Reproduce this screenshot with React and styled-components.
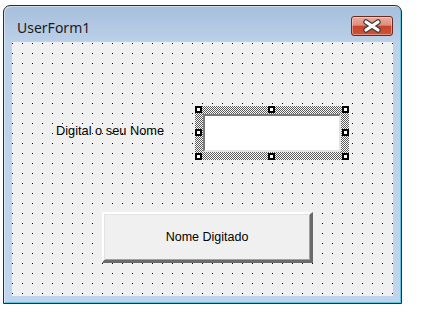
import React from 'react';
import styled, { createGlobalStyle } from 'styled-components';

const GlobalStyle = createGlobalStyle`
  html, body {
    margin: 0;
    padding: 0;
    background: #ffffff;
  }
`;

const Window = styled.div`
  margin: 5px 0 0 3px;
  width: 399px;
  height: 299px;
  box-sizing: border-box;
  border: 1px solid #2e2e2e;
  border-radius: 7px 7px 0 0;
  padding: 0 8px 7px;
  display: flex;
  flex-direction: column;
  background: linear-gradient(#a6bedb 0px, #b2c8e3 20px, #bcd2eb 38px, #bfd4ed 100%);
  box-shadow: inset 1px 1px 0 rgba(255, 255, 255, 0.45), inset -1px -1px 0 #62c4dc;
`;

const TitleBar = styled.div`
  height: 36px;
  flex: none;
  display: flex;
  align-items: flex-start;
  justify-content: space-between;
`;

const Title = styled.span`
  margin: 13px 0 0 5px;
  font-family: "Noto Sans", "Open Sans", sans-serif;
  font-size: 14px;
  line-height: 18px;
  color: #1b1b1b;
`;

const CloseButton = styled.div`
  margin-top: 10px;
  width: 42px;
  height: 20px;
  box-sizing: border-box;
  border: 1px solid #6b2a1e;
  border-radius: 3px;
  display: flex;
  align-items: center;
  justify-content: center;
  background: linear-gradient(#e9ad9f 0%, #dc8f7d 45%, #c8442b 52%, #cc5439 100%);
  box-shadow: inset 0 0 0 1px rgba(255, 225, 215, 0.45);
`;

const Client = styled.div`
  flex: 1;
  position: relative;
  background:
    linear-gradient(to right, transparent 1px, #f0f0f0 1px) 0 1px / 10px 10px,
    linear-gradient(#000 1px, #f0f0f0 1px) 0 1px / 10px 10px;
`;

const Label = styled.div`
  position: absolute;
  left: 44px;
  top: 81px;
  font-family: "Liberation Sans", Arial, sans-serif;
  font-size: 12.8px;
  line-height: 16px;
  color: #000;
  white-space: nowrap;
`;

const Selection = styled.div`
  position: absolute;
  left: 183px;
  top: 64px;
  width: 154px;
  height: 54px;
  box-sizing: border-box;
  padding: 8px;
  background: repeating-conic-gradient(#5a5a5a 0 25%, #fbfbfb 0 50%) 0 0 / 2px 2px;
`;

const TextBox = styled.div`
  width: 100%;
  height: 100%;
  box-sizing: border-box;
  background: #fff;
  border-style: solid;
  border-width: 2px;
  border-color: #7a7a7a #e3e3e3 #e3e3e3 #7a7a7a;
`;

const Handle = styled.span`
  position: absolute;
  width: 7px;
  height: 7px;
  box-sizing: border-box;
  background: #fff;
  border: 2px solid #000;
  left: ${p => p.$x};
  top: ${p => p.$y};
`;

const CommandButton = styled.div`
  position: absolute;
  left: 90px;
  top: 170px;
  width: 211px;
  height: 51px;
  box-sizing: border-box;
  display: flex;
  align-items: center;
  justify-content: center;
  background: #f0f0f0;
  border-style: solid;
  border-width: 2px 3px 3px 2px;
  border-color: #ffffff #6a6a6a #6a6a6a #ffffff;
  box-shadow: inset 1px 1px 0 #e3e3e3, inset -1px -1px 0 #a0a0a0;
  font-family: "Liberation Sans", Arial, sans-serif;
  font-size: 12.5px;
  color: #000;
`;

const handles = [
  ['0px', '0px'], ['73px', '0px'], ['147px', '0px'],
  ['0px', '23px'], ['147px', '23px'],
  ['0px', '47px'], ['73px', '47px'], ['147px', '47px'],
];

const CloseIcon = () => (
  <svg width="20" height="14" viewBox="0 0 20 14">
    <path d="M4 3 L16 11 M16 3 L4 11" stroke="#3d3d3d" strokeWidth="5.5" strokeLinecap="round" fill="none" />
    <path d="M4 3 L16 11 M16 3 L4 11" stroke="#ffffff" strokeWidth="3.2" strokeLinecap="round" fill="none" />
  </svg>
);

const App = () => {
  return (
    <>
      <GlobalStyle />
      <Window>
        <TitleBar>
          <Title>UserForm1</Title>
          <CloseButton>
            <CloseIcon />
          </CloseButton>
        </TitleBar>
        <Client>
          <Label>Digital o seu Nome</Label>
          <Selection>
            <TextBox />
            {handles.map(([x, y], i) => (
              <Handle key={i} $x={x} $y={y} />
            ))}
          </Selection>
          <CommandButton>Nome Digitado</CommandButton>
        </Client>
      </Window>
    </>
  );
};

export default App;
